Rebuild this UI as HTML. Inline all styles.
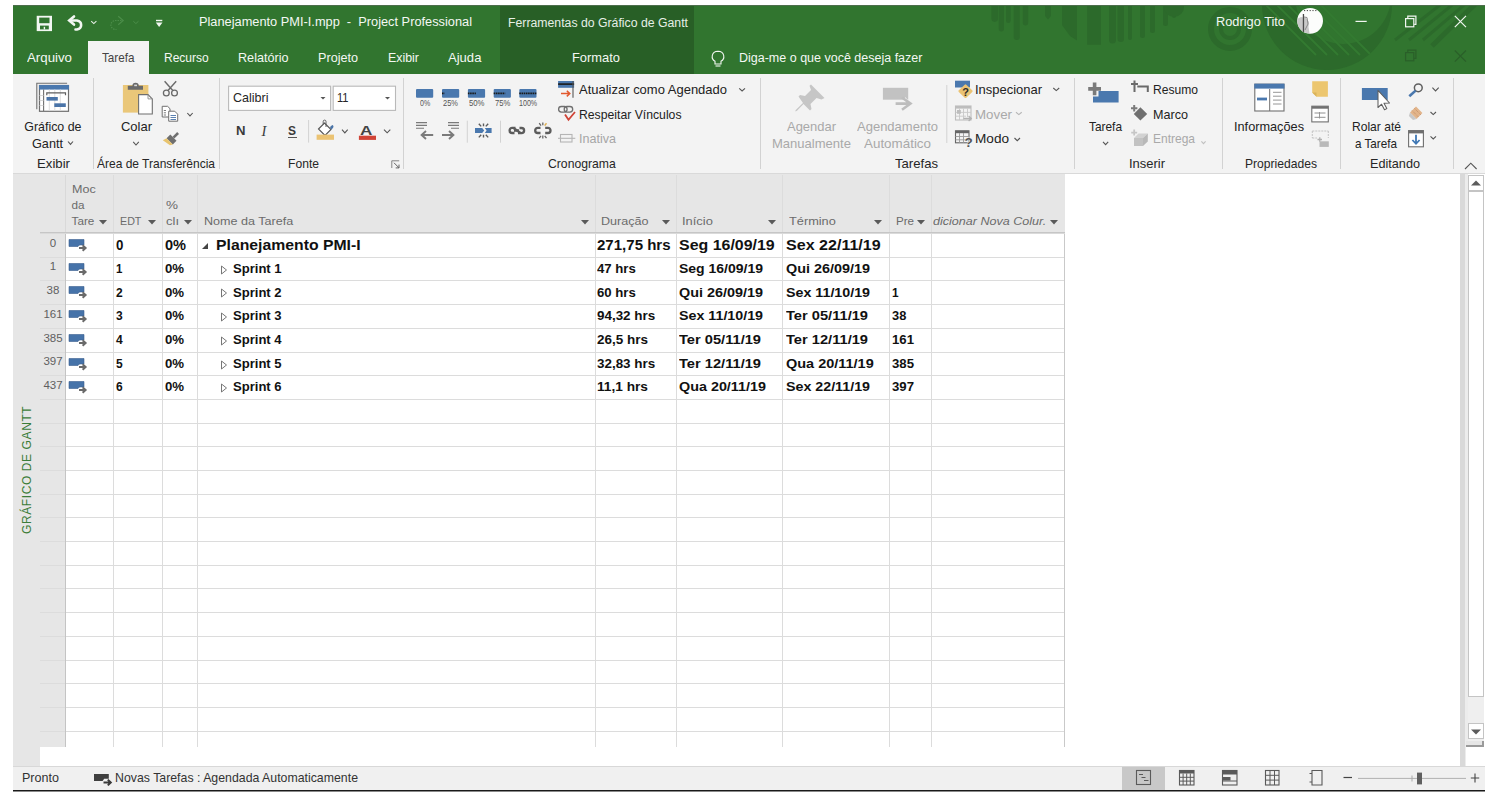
<!DOCTYPE html>
<html><head><meta charset="utf-8"><title>Project</title>
<style>
html,body{margin:0;padding:0;}
body{width:1494px;height:798px;overflow:hidden;position:relative;background:#fff;font-family:"Liberation Sans", sans-serif;}
</style></head><body>
<div style="position:absolute;left:13px;top:5px;width:1472px;height:69px;background:#31752f;"></div>
<div style="position:absolute;left:500px;top:5px;width:194px;height:69px;background:#285f26;"></div>
<svg style="position:absolute;left:13px;top:5px" width="1472" height="69" viewBox="13 5 1472 69"><path d="M991.4 5 V18.599999999999987 A3.3000000000000114 3.3000000000000114 0 0 0 998 18.599999999999987 V5Z" fill="#2c6a2b"/><path d="M998.7 5 V28.850000000000023 A2.6499999999999773 2.6499999999999773 0 0 0 1004 28.850000000000023 V5Z" fill="#2c6a2b"/><path d="M1006 5 V20.649999999999977 A2.3500000000000227 2.3500000000000227 0 0 0 1010.7 20.649999999999977 V5Z" fill="#2c6a2b"/><path d="M1013.7 5 V36.950000000000045 A3.0499999999999545 3.0499999999999545 0 0 0 1019.8 36.950000000000045 V5Z" fill="#2c6a2b"/><path d="M1022.8 5 V22.799999999999955 A2.7000000000000455 2.7000000000000455 0 0 0 1028.2 22.799999999999955 V5Z" fill="#2c6a2b"/><path d="M1109 5 V40.0 A3.5 3.5 0 0 0 1116 40.0 V5Z" fill="#2c6a2b"/><path d="M1117.5 5 V38.75 A3.25 3.25 0 0 0 1124 38.75 V5Z" fill="#2c6a2b"/><path d="M1128 5 V38.0 A2.0 2.0 0 0 0 1132 38.0 V5Z" fill="#2c6a2b"/><path d="M1140 5 V35.5 A2.5 2.5 0 0 0 1145 35.5 V5Z" fill="#2c6a2b"/><path d="M1150 5 V30.5 A2.5 2.5 0 0 0 1155 30.5 V5Z" fill="#2c6a2b"/><path d="M1163 5 V23.5 A2.5 2.5 0 0 0 1168 23.5 V5Z" fill="#2c6a2b"/><path d="M1172 5 V16.0 A2.0 2.0 0 0 0 1176 16.0 V5Z" fill="#2c6a2b"/><path d="M1045 5 H1051 V16 L1048 19.5 L1045 16Z" fill="#2c6a2b"/><path d="M1062 5 H1077 V40.5 L1070 36 L1062 25Z" fill="#2c6a2b"/><path d="M1087.2 5 H1101 V44.8 H1087.2Z" fill="#2c6a2b"/><circle cx="1174" cy="7" r="10" fill="#2c6a2b"/><circle cx="1230" cy="29" r="19" fill="none" stroke="#2c6a2b" stroke-width="6"/><circle cx="1230" cy="29" r="9" fill="none" stroke="#2c6a2b" stroke-width="4"/><defs><clipPath id="bigc"><circle cx="1327" cy="5" r="65"/></clipPath></defs><circle cx="1327" cy="5" r="65" fill="#2c6a2b"/><circle cx="1343" cy="-4" r="48" fill="#31752f"/><g clip-path="url(#bigc)"><path d="M1266 5 L1316 55" stroke="#337a31" stroke-width="1.8"/><path d="M1277 5 L1327 55" stroke="#337a31" stroke-width="1.8"/><path d="M1288 5 L1338 55" stroke="#337a31" stroke-width="1.8"/><path d="M1299 5 L1349 55" stroke="#337a31" stroke-width="1.8"/><path d="M1310 5 L1360 55" stroke="#337a31" stroke-width="1.8"/><path d="M1321 5 L1371 55" stroke="#337a31" stroke-width="1.8"/></g><path d="M1395 40 L1440 5" stroke="#2c6a2b" stroke-width="3"/><path d="M1409 40 L1452 5" stroke="#2c6a2b" stroke-width="3"/><path d="M1423 40 L1464 5" stroke="#2c6a2b" stroke-width="3"/><path d="M1437 40 L1476 5" stroke="#2c6a2b" stroke-width="3"/><path d="M1432 46 L1474 5" stroke="#2c6a2b" stroke-width="5"/></svg>
<div style="position:absolute;left:13px;top:5px;width:1472px;height:1px;background:#4d6e4c;"></div>
<div style="position:absolute;left:88px;top:41px;width:61px;height:33px;background:#f3f3f3;"></div>
<div style="position:absolute;left:13px;top:74px;width:1472px;height:99px;background:#f3f3f3;"></div>
<div style="position:absolute;left:13px;top:173px;width:1472px;height:1px;background:#d9d9d9;"></div>
<span style="position:absolute;left:199.00px;top:16.42px;line-height:12.5px;white-space:pre;color:#f4f8f4;font-size:12.5px;font-weight:400;transform:scaleX(1.0233);transform-origin:0 0;">Planejamento PMI-I.mpp  -  Project Professional</span>
<span style="position:absolute;left:508.00px;top:16.84px;line-height:12px;white-space:pre;color:#e6efe6;font-size:12px;font-weight:400;transform:scaleX(1.0222);transform-origin:0 0;">Ferramentas do Gráfico de Gantt</span>
<span style="position:absolute;left:1216.00px;top:16.42px;line-height:12.5px;white-space:pre;color:#f4f8f4;font-size:12.5px;font-weight:400;transform:scaleX(1.0236);transform-origin:0 0;">Rodrigo Tito</span>
<span style="position:absolute;left:26.70px;top:52.16px;line-height:12.8px;white-space:pre;color:#f4f8f4;font-size:12.8px;font-weight:400;transform:scaleX(1.0371);transform-origin:0 0;">Arquivo</span>
<span style="position:absolute;left:101.70px;top:52.16px;line-height:12.8px;white-space:pre;color:#444;font-size:12.8px;font-weight:400;transform:scaleX(0.9135);transform-origin:0 0;">Tarefa</span>
<span style="position:absolute;left:163.90px;top:52.16px;line-height:12.8px;white-space:pre;color:#f4f8f4;font-size:12.8px;font-weight:400;transform:scaleX(0.9380);transform-origin:0 0;">Recurso</span>
<span style="position:absolute;left:237.90px;top:52.16px;line-height:12.8px;white-space:pre;color:#f4f8f4;font-size:12.8px;font-weight:400;transform:scaleX(0.9860);transform-origin:0 0;">Relatório</span>
<span style="position:absolute;left:317.80px;top:52.16px;line-height:12.8px;white-space:pre;color:#f4f8f4;font-size:12.8px;font-weight:400;transform:scaleX(0.9890);transform-origin:0 0;">Projeto</span>
<span style="position:absolute;left:387.80px;top:52.16px;line-height:12.8px;white-space:pre;color:#f4f8f4;font-size:12.8px;font-weight:400;transform:scaleX(0.9688);transform-origin:0 0;">Exibir</span>
<span style="position:absolute;left:448.00px;top:52.16px;line-height:12.8px;white-space:pre;color:#f4f8f4;font-size:12.8px;font-weight:400;transform:scaleX(1.0203);transform-origin:0 0;">Ajuda</span>
<span style="position:absolute;left:572.00px;top:52.16px;line-height:12.8px;white-space:pre;color:#f4f8f4;font-size:12.8px;font-weight:400;transform:scaleX(1.0072);transform-origin:0 0;">Formato</span>
<span style="position:absolute;left:739.00px;top:52.42px;line-height:12.5px;white-space:pre;color:#f4f8f4;font-size:12.5px;font-weight:400;">Diga-me o que você deseja fazer</span>
<div style="position:absolute;left:93px;top:78px;width:1px;height:91px;background:#d2d2d2;"></div>
<div style="position:absolute;left:219px;top:78px;width:1px;height:91px;background:#d2d2d2;"></div>
<div style="position:absolute;left:403px;top:78px;width:1px;height:91px;background:#d2d2d2;"></div>
<div style="position:absolute;left:760px;top:78px;width:1px;height:91px;background:#d2d2d2;"></div>
<div style="position:absolute;left:1074px;top:78px;width:1px;height:91px;background:#d2d2d2;"></div>
<div style="position:absolute;left:1222px;top:78px;width:1px;height:91px;background:#d2d2d2;"></div>
<div style="position:absolute;left:1340px;top:78px;width:1px;height:91px;background:#d2d2d2;"></div>
<div style="position:absolute;left:1453px;top:78px;width:1px;height:91px;background:#d2d2d2;"></div>
<span style="position:absolute;left:36.50px;top:158.17px;line-height:12.2px;white-space:pre;color:#262626;font-size:12.2px;font-weight:400;transform:scaleX(1.0825);transform-origin:0 0;">Exibir</span>
<span style="position:absolute;left:97.00px;top:158.17px;line-height:12.2px;white-space:pre;color:#262626;font-size:12.2px;font-weight:400;transform:scaleX(0.9840);transform-origin:0 0;">Área de Transferência</span>
<span style="position:absolute;left:287.50px;top:158.17px;line-height:12.2px;white-space:pre;color:#262626;font-size:12.2px;font-weight:400;transform:scaleX(0.9945);transform-origin:0 0;">Fonte</span>
<span style="position:absolute;left:548.00px;top:158.17px;line-height:12.2px;white-space:pre;color:#262626;font-size:12.2px;font-weight:400;">Cronograma</span>
<span style="position:absolute;left:894.50px;top:158.17px;line-height:12.2px;white-space:pre;color:#262626;font-size:12.2px;font-weight:400;transform:scaleX(1.0758);transform-origin:0 0;">Tarefas</span>
<span style="position:absolute;left:1129.00px;top:158.17px;line-height:12.2px;white-space:pre;color:#262626;font-size:12.2px;font-weight:400;transform:scaleX(1.0627);transform-origin:0 0;">Inserir</span>
<span style="position:absolute;left:1245.00px;top:158.17px;line-height:12.2px;white-space:pre;color:#262626;font-size:12.2px;font-weight:400;transform:scaleX(0.9931);transform-origin:0 0;">Propriedades</span>
<span style="position:absolute;left:1370.00px;top:158.17px;line-height:12.2px;white-space:pre;color:#262626;font-size:12.2px;font-weight:400;transform:scaleX(1.0390);transform-origin:0 0;">Editando</span>
<span style="position:absolute;left:24.30px;top:120.50px;line-height:12.4px;white-space:pre;color:#222;font-size:12.4px;font-weight:400;">Gráfico de</span>
<span style="position:absolute;left:31.70px;top:137.50px;line-height:12.4px;white-space:pre;color:#222;font-size:12.4px;font-weight:400;transform:scaleX(1.0227);transform-origin:0 0;">Gantt</span>
<span style="position:absolute;left:120.50px;top:120.50px;line-height:12.4px;white-space:pre;color:#222;font-size:12.4px;font-weight:400;transform:scaleX(1.0470);transform-origin:0 0;">Colar</span>
<span style="position:absolute;left:579.00px;top:83.90px;line-height:12.4px;white-space:pre;color:#222;font-size:12.4px;font-weight:400;transform:scaleX(1.0480);transform-origin:0 0;">Atualizar como Agendado</span>
<span style="position:absolute;left:579.00px;top:108.50px;line-height:12.4px;white-space:pre;color:#222;font-size:12.4px;font-weight:400;transform:scaleX(0.9856);transform-origin:0 0;">Respeitar Vínculos</span>
<span style="position:absolute;left:579.00px;top:133.00px;line-height:12.4px;white-space:pre;color:#a6a6a6;font-size:12.4px;font-weight:400;transform:scaleX(1.0133);transform-origin:0 0;">Inativa</span>
<span style="position:absolute;left:786.50px;top:120.50px;line-height:12.4px;white-space:pre;color:#a9a9a9;font-size:12.4px;font-weight:400;transform:scaleX(1.0457);transform-origin:0 0;">Agendar</span>
<span style="position:absolute;left:771.50px;top:137.50px;line-height:12.4px;white-space:pre;color:#a9a9a9;font-size:12.4px;font-weight:400;transform:scaleX(1.0522);transform-origin:0 0;">Manualmente</span>
<span style="position:absolute;left:856.50px;top:120.50px;line-height:12.4px;white-space:pre;color:#a9a9a9;font-size:12.4px;font-weight:400;transform:scaleX(1.0496);transform-origin:0 0;">Agendamento</span>
<span style="position:absolute;left:863.50px;top:137.50px;line-height:12.4px;white-space:pre;color:#a9a9a9;font-size:12.4px;font-weight:400;transform:scaleX(1.0809);transform-origin:0 0;">Automático</span>
<span style="position:absolute;left:975.00px;top:83.90px;line-height:12.4px;white-space:pre;color:#222;font-size:12.4px;font-weight:400;transform:scaleX(1.0459);transform-origin:0 0;">Inspecionar</span>
<span style="position:absolute;left:975.00px;top:108.50px;line-height:12.4px;white-space:pre;color:#a9a9a9;font-size:12.4px;font-weight:400;transform:scaleX(1.0744);transform-origin:0 0;">Mover</span>
<span style="position:absolute;left:975.00px;top:133.00px;line-height:12.4px;white-space:pre;color:#222;font-size:12.4px;font-weight:400;transform:scaleX(1.0968);transform-origin:0 0;">Modo</span>
<span style="position:absolute;left:1088.50px;top:120.50px;line-height:12.4px;white-space:pre;color:#222;font-size:12.4px;font-weight:400;transform:scaleX(0.9583);transform-origin:0 0;">Tarefa</span>
<span style="position:absolute;left:1153.00px;top:83.90px;line-height:12.4px;white-space:pre;color:#222;font-size:12.4px;font-weight:400;transform:scaleX(0.9753);transform-origin:0 0;">Resumo</span>
<span style="position:absolute;left:1153.00px;top:108.50px;line-height:12.4px;white-space:pre;color:#222;font-size:12.4px;font-weight:400;transform:scaleX(1.0163);transform-origin:0 0;">Marco</span>
<span style="position:absolute;left:1153.00px;top:133.00px;line-height:12.4px;white-space:pre;color:#a9a9a9;font-size:12.4px;font-weight:400;transform:scaleX(0.9676);transform-origin:0 0;">Entrega</span>
<span style="position:absolute;left:1234.00px;top:120.50px;line-height:12.4px;white-space:pre;color:#222;font-size:12.4px;font-weight:400;transform:scaleX(1.0266);transform-origin:0 0;">Informações</span>
<span style="position:absolute;left:1351.50px;top:120.50px;line-height:12.4px;white-space:pre;color:#222;font-size:12.4px;font-weight:400;transform:scaleX(0.9745);transform-origin:0 0;">Rolar até</span>
<span style="position:absolute;left:1355.00px;top:137.50px;line-height:12.4px;white-space:pre;color:#222;font-size:12.4px;font-weight:400;transform:scaleX(0.9428);transform-origin:0 0;">a Tarefa</span>
<div style="position:absolute;left:13px;top:174px;width:27px;height:592px;background:#e6e6e6;"></div>
<div style="position:absolute;left:40px;top:174px;width:1025px;height:59px;background:#e6e6e6;"></div>
<div style="position:absolute;left:40px;top:233px;width:25px;height:514px;background:#e6e6e6;"></div>
<div style="position:absolute;left:65px;top:233px;width:999px;height:514px;background:#ffffff;"></div>
<div style="position:absolute;left:40px;top:257px;width:1024px;height:1px;background:#dcdcdc;"></div>
<div style="position:absolute;left:40px;top:280px;width:1024px;height:1px;background:#dcdcdc;"></div>
<div style="position:absolute;left:40px;top:304px;width:1024px;height:1px;background:#dcdcdc;"></div>
<div style="position:absolute;left:40px;top:328px;width:1024px;height:1px;background:#dcdcdc;"></div>
<div style="position:absolute;left:40px;top:352px;width:1024px;height:1px;background:#dcdcdc;"></div>
<div style="position:absolute;left:40px;top:375px;width:1024px;height:1px;background:#dcdcdc;"></div>
<div style="position:absolute;left:40px;top:399px;width:1024px;height:1px;background:#dcdcdc;"></div>
<div style="position:absolute;left:40px;top:423px;width:1024px;height:1px;background:#dcdcdc;"></div>
<div style="position:absolute;left:40px;top:446px;width:1024px;height:1px;background:#dcdcdc;"></div>
<div style="position:absolute;left:40px;top:470px;width:1024px;height:1px;background:#dcdcdc;"></div>
<div style="position:absolute;left:40px;top:494px;width:1024px;height:1px;background:#dcdcdc;"></div>
<div style="position:absolute;left:40px;top:517px;width:1024px;height:1px;background:#dcdcdc;"></div>
<div style="position:absolute;left:40px;top:541px;width:1024px;height:1px;background:#dcdcdc;"></div>
<div style="position:absolute;left:40px;top:565px;width:1024px;height:1px;background:#dcdcdc;"></div>
<div style="position:absolute;left:40px;top:588px;width:1024px;height:1px;background:#dcdcdc;"></div>
<div style="position:absolute;left:40px;top:612px;width:1024px;height:1px;background:#dcdcdc;"></div>
<div style="position:absolute;left:40px;top:636px;width:1024px;height:1px;background:#dcdcdc;"></div>
<div style="position:absolute;left:40px;top:660px;width:1024px;height:1px;background:#dcdcdc;"></div>
<div style="position:absolute;left:40px;top:683px;width:1024px;height:1px;background:#dcdcdc;"></div>
<div style="position:absolute;left:40px;top:707px;width:1024px;height:1px;background:#dcdcdc;"></div>
<div style="position:absolute;left:40px;top:731px;width:1024px;height:1px;background:#dcdcdc;"></div>
<div style="position:absolute;left:113px;top:175px;width:1px;height:572px;background:#dcdcdc;"></div>
<div style="position:absolute;left:162px;top:175px;width:1px;height:572px;background:#dcdcdc;"></div>
<div style="position:absolute;left:197px;top:175px;width:1px;height:572px;background:#dcdcdc;"></div>
<div style="position:absolute;left:595px;top:175px;width:1px;height:572px;background:#dcdcdc;"></div>
<div style="position:absolute;left:676px;top:175px;width:1px;height:572px;background:#dcdcdc;"></div>
<div style="position:absolute;left:782px;top:175px;width:1px;height:572px;background:#dcdcdc;"></div>
<div style="position:absolute;left:889px;top:175px;width:1px;height:572px;background:#dcdcdc;"></div>
<div style="position:absolute;left:931px;top:175px;width:1px;height:572px;background:#dcdcdc;"></div>
<div style="position:absolute;left:65px;top:175px;width:1px;height:58px;background:#d9d9d9;"></div>
<div style="position:absolute;left:65px;top:233px;width:1px;height:514px;background:#c4c4c4;"></div>
<div style="position:absolute;left:1064px;top:233px;width:1px;height:514px;background:#c9c9c9;"></div>
<div style="position:absolute;left:40px;top:232px;width:1025px;height:1px;background:#c6c6c6;"></div>
<div style="position:absolute;left:40px;top:233px;width:1025px;height:1px;background:#dadada;"></div>
<div style="position:absolute;left:20px;top:534px;width:130px;height:14px;transform:rotate(-90deg);transform-origin:0 0;color:#3b7d39;font-size:12px;line-height:14px;letter-spacing:0.6px;white-space:pre;">GRÁFICO DE GANTT</div>
<span style="position:absolute;left:71.60px;top:182.60px;line-height:11.7px;white-space:pre;color:#6b6b6b;font-size:11.7px;font-weight:400;transform:scaleX(1.0727);transform-origin:0 0;">Moc</span>
<span style="position:absolute;left:71.60px;top:198.60px;line-height:11.7px;white-space:pre;color:#6b6b6b;font-size:11.7px;font-weight:400;">da</span>
<span style="position:absolute;left:71.60px;top:214.70px;line-height:11.7px;white-space:pre;color:#6b6b6b;font-size:11.7px;font-weight:400;">Tare</span>
<span style="position:absolute;left:120.00px;top:214.70px;line-height:11.7px;white-space:pre;color:#6b6b6b;font-size:11.7px;font-weight:400;transform:scaleX(0.9155);transform-origin:0 0;">EDT</span>
<span style="position:absolute;left:165.50px;top:198.60px;line-height:11.7px;white-space:pre;color:#6b6b6b;font-size:11.7px;font-weight:400;transform:scaleX(1.1532);transform-origin:0 0;">%</span>
<span style="position:absolute;left:165.50px;top:214.70px;line-height:11.7px;white-space:pre;color:#6b6b6b;font-size:11.7px;font-weight:400;transform:scaleX(1.1123);transform-origin:0 0;">clı</span>
<span style="position:absolute;left:204.30px;top:214.70px;line-height:11.7px;white-space:pre;color:#6b6b6b;font-size:11.7px;font-weight:400;transform:scaleX(1.0753);transform-origin:0 0;">Nome da Tarefa</span>
<span style="position:absolute;left:601.00px;top:214.70px;line-height:11.7px;white-space:pre;color:#6b6b6b;font-size:11.7px;font-weight:400;transform:scaleX(1.0772);transform-origin:0 0;">Duração</span>
<span style="position:absolute;left:682.00px;top:214.70px;line-height:11.7px;white-space:pre;color:#6b6b6b;font-size:11.7px;font-weight:400;transform:scaleX(1.1060);transform-origin:0 0;">Início</span>
<span style="position:absolute;left:789.20px;top:214.70px;line-height:11.7px;white-space:pre;color:#6b6b6b;font-size:11.7px;font-weight:400;transform:scaleX(1.0915);transform-origin:0 0;">Término</span>
<span style="position:absolute;left:895.60px;top:214.70px;line-height:11.7px;white-space:pre;color:#6b6b6b;font-size:11.7px;font-weight:400;transform:scaleX(0.9943);transform-origin:0 0;">Pre</span>
<span style="position:absolute;left:933.00px;top:214.70px;line-height:11.7px;white-space:pre;color:#6b6b6b;font-size:11.7px;font-weight:400;font-style:italic;transform:scaleX(1.0735);transform-origin:0 0;">dicionar Nova Colur.</span>
<svg style="position:absolute;left:99px;top:220px;" width="8" height="5" viewBox="0 0 8 5"><path d="M0 0H8L4 4.5Z" fill="#5a5a5a"/></svg>
<svg style="position:absolute;left:148px;top:220px;" width="8" height="5" viewBox="0 0 8 5"><path d="M0 0H8L4 4.5Z" fill="#5a5a5a"/></svg>
<svg style="position:absolute;left:184px;top:220px;" width="8" height="5" viewBox="0 0 8 5"><path d="M0 0H8L4 4.5Z" fill="#5a5a5a"/></svg>
<svg style="position:absolute;left:581px;top:220px;" width="8" height="5" viewBox="0 0 8 5"><path d="M0 0H8L4 4.5Z" fill="#5a5a5a"/></svg>
<svg style="position:absolute;left:662px;top:220px;" width="8" height="5" viewBox="0 0 8 5"><path d="M0 0H8L4 4.5Z" fill="#5a5a5a"/></svg>
<svg style="position:absolute;left:768px;top:220px;" width="8" height="5" viewBox="0 0 8 5"><path d="M0 0H8L4 4.5Z" fill="#5a5a5a"/></svg>
<svg style="position:absolute;left:874px;top:220px;" width="8" height="5" viewBox="0 0 8 5"><path d="M0 0H8L4 4.5Z" fill="#5a5a5a"/></svg>
<svg style="position:absolute;left:917px;top:220px;" width="8" height="5" viewBox="0 0 8 5"><path d="M0 0H8L4 4.5Z" fill="#5a5a5a"/></svg>
<svg style="position:absolute;left:1050px;top:220px;" width="8" height="5" viewBox="0 0 8 5"><path d="M0 0H8L4 4.5Z" fill="#5a5a5a"/></svg>
<span style="position:absolute;left:49.80px;top:237.77px;line-height:11.5px;white-space:pre;color:#5f5f5f;font-size:11.5px;font-weight:400;">0</span>
<span style="position:absolute;left:116.00px;top:238.11px;line-height:14.4px;white-space:pre;color:#111;font-size:14.4px;font-weight:700;transform:scaleX(0.9232);transform-origin:0 0;">0</span>
<span style="position:absolute;left:164.50px;top:238.11px;line-height:14.4px;white-space:pre;color:#111;font-size:14.4px;font-weight:700;transform:scaleX(1.0138);transform-origin:0 0;">0%</span>
<span style="position:absolute;left:215.70px;top:238.11px;line-height:14.4px;white-space:pre;color:#111;font-size:14.4px;font-weight:700;transform:scaleX(1.0958);transform-origin:0 0;">Planejamento PMI-I</span>
<span style="position:absolute;left:597.40px;top:238.11px;line-height:14.4px;white-space:pre;color:#111;font-size:14.4px;font-weight:700;transform:scaleX(1.0451);transform-origin:0 0;">271,75 hrs</span>
<span style="position:absolute;left:679.40px;top:238.11px;line-height:14.4px;white-space:pre;color:#111;font-size:14.4px;font-weight:700;transform:scaleX(1.1074);transform-origin:0 0;">Seg 16/09/19</span>
<span style="position:absolute;left:785.80px;top:238.11px;line-height:14.4px;white-space:pre;color:#111;font-size:14.4px;font-weight:700;transform:scaleX(1.1164);transform-origin:0 0;">Sex 22/11/19</span>
<svg style="position:absolute;left:68px;top:238px;" width="20" height="14" viewBox="0 0 20 14"><path d="M1 1.5 H16 V7 H11.5 L10 8.5 H1Z" fill="#4673a9" stroke="#3a5f8f" stroke-width="0.6"/><path d="M11 10 H17.2 M14.6 7.2 L17.6 10 L14.6 12.8" stroke="#6a6a6a" stroke-width="2" fill="none"/></svg>
<svg style="position:absolute;left:201px;top:242px;" width="8" height="8" viewBox="0 0 8 8"><path d="M1 7H7V1Z" fill="#444"/></svg>
<span style="position:absolute;left:49.80px;top:261.47px;line-height:11.5px;white-space:pre;color:#5f5f5f;font-size:11.5px;font-weight:400;">1</span>
<span style="position:absolute;left:116.00px;top:262.84px;line-height:12px;white-space:pre;color:#111;font-size:12px;font-weight:700;transform:scaleX(0.9570);transform-origin:0 0;">1</span>
<span style="position:absolute;left:164.50px;top:262.84px;line-height:12px;white-space:pre;color:#111;font-size:12px;font-weight:700;transform:scaleX(1.1013);transform-origin:0 0;">0%</span>
<span style="position:absolute;left:233.40px;top:262.84px;line-height:12px;white-space:pre;color:#111;font-size:12px;font-weight:700;transform:scaleX(1.0879);transform-origin:0 0;">Sprint 1</span>
<span style="position:absolute;left:597.40px;top:262.84px;line-height:12px;white-space:pre;color:#111;font-size:12px;font-weight:700;transform:scaleX(1.0973);transform-origin:0 0;">47 hrs</span>
<span style="position:absolute;left:679.40px;top:262.84px;line-height:12px;white-space:pre;color:#111;font-size:12px;font-weight:700;transform:scaleX(1.1657);transform-origin:0 0;">Seg 16/09/19</span>
<span style="position:absolute;left:785.80px;top:262.84px;line-height:12px;white-space:pre;color:#111;font-size:12px;font-weight:700;transform:scaleX(1.1992);transform-origin:0 0;">Qui 26/09/19</span>
<svg style="position:absolute;left:68px;top:262px;" width="20" height="14" viewBox="0 0 20 14"><path d="M1 1.5 H16 V7 H11.5 L10 8.5 H1Z" fill="#4673a9" stroke="#3a5f8f" stroke-width="0.6"/><path d="M11 10 H17.2 M14.6 7.2 L17.6 10 L14.6 12.8" stroke="#6a6a6a" stroke-width="2" fill="none"/></svg>
<svg style="position:absolute;left:220px;top:265px;" width="8" height="10" viewBox="0 0 8 10"><path d="M1.5 1V9L6.5 5Z" fill="none" stroke="#777" stroke-width="1"/></svg>
<span style="position:absolute;left:46.60px;top:285.17px;line-height:11.5px;white-space:pre;color:#5f5f5f;font-size:11.5px;font-weight:400;">38</span>
<span style="position:absolute;left:116.00px;top:286.54px;line-height:12px;white-space:pre;color:#111;font-size:12px;font-weight:700;">2</span>
<span style="position:absolute;left:164.50px;top:286.54px;line-height:12px;white-space:pre;color:#111;font-size:12px;font-weight:700;transform:scaleX(1.1013);transform-origin:0 0;">0%</span>
<span style="position:absolute;left:233.40px;top:286.54px;line-height:12px;white-space:pre;color:#111;font-size:12px;font-weight:700;transform:scaleX(1.0879);transform-origin:0 0;">Sprint 2</span>
<span style="position:absolute;left:597.40px;top:286.54px;line-height:12px;white-space:pre;color:#111;font-size:12px;font-weight:700;transform:scaleX(1.0973);transform-origin:0 0;">60 hrs</span>
<span style="position:absolute;left:679.40px;top:286.54px;line-height:12px;white-space:pre;color:#111;font-size:12px;font-weight:700;transform:scaleX(1.1992);transform-origin:0 0;">Qui 26/09/19</span>
<span style="position:absolute;left:785.80px;top:286.54px;line-height:12px;white-space:pre;color:#111;font-size:12px;font-weight:700;transform:scaleX(1.1875);transform-origin:0 0;">Sex 11/10/19</span>
<span style="position:absolute;left:892.00px;top:286.54px;line-height:12px;white-space:pre;color:#111;font-size:12px;font-weight:700;transform:scaleX(0.9869);transform-origin:0 0;">1</span>
<svg style="position:absolute;left:68px;top:285px;" width="20" height="14" viewBox="0 0 20 14"><path d="M1 1.5 H16 V7 H11.5 L10 8.5 H1Z" fill="#4673a9" stroke="#3a5f8f" stroke-width="0.6"/><path d="M11 10 H17.2 M14.6 7.2 L17.6 10 L14.6 12.8" stroke="#6a6a6a" stroke-width="2" fill="none"/></svg>
<svg style="position:absolute;left:220px;top:288px;" width="8" height="10" viewBox="0 0 8 10"><path d="M1.5 1V9L6.5 5Z" fill="none" stroke="#777" stroke-width="1"/></svg>
<span style="position:absolute;left:43.41px;top:308.87px;line-height:11.5px;white-space:pre;color:#5f5f5f;font-size:11.5px;font-weight:400;">161</span>
<span style="position:absolute;left:116.00px;top:310.24px;line-height:12px;white-space:pre;color:#111;font-size:12px;font-weight:700;">3</span>
<span style="position:absolute;left:164.50px;top:310.24px;line-height:12px;white-space:pre;color:#111;font-size:12px;font-weight:700;transform:scaleX(1.1013);transform-origin:0 0;">0%</span>
<span style="position:absolute;left:233.40px;top:310.24px;line-height:12px;white-space:pre;color:#111;font-size:12px;font-weight:700;transform:scaleX(1.0879);transform-origin:0 0;">Sprint 3</span>
<span style="position:absolute;left:597.40px;top:310.24px;line-height:12px;white-space:pre;color:#111;font-size:12px;font-weight:700;transform:scaleX(1.1182);transform-origin:0 0;">94,32 hrs</span>
<span style="position:absolute;left:679.40px;top:310.24px;line-height:12px;white-space:pre;color:#111;font-size:12px;font-weight:700;transform:scaleX(1.1875);transform-origin:0 0;">Sex 11/10/19</span>
<span style="position:absolute;left:785.80px;top:310.24px;line-height:12px;white-space:pre;color:#111;font-size:12px;font-weight:700;transform:scaleX(1.2207);transform-origin:0 0;">Ter 05/11/19</span>
<span style="position:absolute;left:892.00px;top:310.24px;line-height:12px;white-space:pre;color:#111;font-size:12px;font-weight:700;transform:scaleX(1.0704);transform-origin:0 0;">38</span>
<svg style="position:absolute;left:68px;top:309px;" width="20" height="14" viewBox="0 0 20 14"><path d="M1 1.5 H16 V7 H11.5 L10 8.5 H1Z" fill="#4673a9" stroke="#3a5f8f" stroke-width="0.6"/><path d="M11 10 H17.2 M14.6 7.2 L17.6 10 L14.6 12.8" stroke="#6a6a6a" stroke-width="2" fill="none"/></svg>
<svg style="position:absolute;left:220px;top:312px;" width="8" height="10" viewBox="0 0 8 10"><path d="M1.5 1V9L6.5 5Z" fill="none" stroke="#777" stroke-width="1"/></svg>
<span style="position:absolute;left:43.41px;top:332.57px;line-height:11.5px;white-space:pre;color:#5f5f5f;font-size:11.5px;font-weight:400;">385</span>
<span style="position:absolute;left:116.00px;top:333.94px;line-height:12px;white-space:pre;color:#111;font-size:12px;font-weight:700;">4</span>
<span style="position:absolute;left:164.50px;top:333.94px;line-height:12px;white-space:pre;color:#111;font-size:12px;font-weight:700;transform:scaleX(1.1013);transform-origin:0 0;">0%</span>
<span style="position:absolute;left:233.40px;top:333.94px;line-height:12px;white-space:pre;color:#111;font-size:12px;font-weight:700;transform:scaleX(1.0879);transform-origin:0 0;">Sprint 4</span>
<span style="position:absolute;left:597.40px;top:333.94px;line-height:12px;white-space:pre;color:#111;font-size:12px;font-weight:700;transform:scaleX(1.1218);transform-origin:0 0;">26,5 hrs</span>
<span style="position:absolute;left:679.40px;top:333.94px;line-height:12px;white-space:pre;color:#111;font-size:12px;font-weight:700;transform:scaleX(1.2207);transform-origin:0 0;">Ter 05/11/19</span>
<span style="position:absolute;left:785.80px;top:333.94px;line-height:12px;white-space:pre;color:#111;font-size:12px;font-weight:700;transform:scaleX(1.2207);transform-origin:0 0;">Ter 12/11/19</span>
<span style="position:absolute;left:892.00px;top:333.94px;line-height:12px;white-space:pre;color:#111;font-size:12px;font-weight:700;transform:scaleX(1.0983);transform-origin:0 0;">161</span>
<svg style="position:absolute;left:68px;top:333px;" width="20" height="14" viewBox="0 0 20 14"><path d="M1 1.5 H16 V7 H11.5 L10 8.5 H1Z" fill="#4673a9" stroke="#3a5f8f" stroke-width="0.6"/><path d="M11 10 H17.2 M14.6 7.2 L17.6 10 L14.6 12.8" stroke="#6a6a6a" stroke-width="2" fill="none"/></svg>
<svg style="position:absolute;left:220px;top:336px;" width="8" height="10" viewBox="0 0 8 10"><path d="M1.5 1V9L6.5 5Z" fill="none" stroke="#777" stroke-width="1"/></svg>
<span style="position:absolute;left:43.41px;top:356.27px;line-height:11.5px;white-space:pre;color:#5f5f5f;font-size:11.5px;font-weight:400;">397</span>
<span style="position:absolute;left:116.00px;top:357.64px;line-height:12px;white-space:pre;color:#111;font-size:12px;font-weight:700;">5</span>
<span style="position:absolute;left:164.50px;top:357.64px;line-height:12px;white-space:pre;color:#111;font-size:12px;font-weight:700;transform:scaleX(1.1013);transform-origin:0 0;">0%</span>
<span style="position:absolute;left:233.40px;top:357.64px;line-height:12px;white-space:pre;color:#111;font-size:12px;font-weight:700;transform:scaleX(1.0879);transform-origin:0 0;">Sprint 5</span>
<span style="position:absolute;left:597.40px;top:357.64px;line-height:12px;white-space:pre;color:#111;font-size:12px;font-weight:700;transform:scaleX(1.1182);transform-origin:0 0;">32,83 hrs</span>
<span style="position:absolute;left:679.40px;top:357.64px;line-height:12px;white-space:pre;color:#111;font-size:12px;font-weight:700;transform:scaleX(1.2207);transform-origin:0 0;">Ter 12/11/19</span>
<span style="position:absolute;left:785.80px;top:357.64px;line-height:12px;white-space:pre;color:#111;font-size:12px;font-weight:700;transform:scaleX(1.2058);transform-origin:0 0;">Qua 20/11/19</span>
<span style="position:absolute;left:892.00px;top:357.64px;line-height:12px;white-space:pre;color:#111;font-size:12px;font-weight:700;transform:scaleX(1.0983);transform-origin:0 0;">385</span>
<svg style="position:absolute;left:68px;top:357px;" width="20" height="14" viewBox="0 0 20 14"><path d="M1 1.5 H16 V7 H11.5 L10 8.5 H1Z" fill="#4673a9" stroke="#3a5f8f" stroke-width="0.6"/><path d="M11 10 H17.2 M14.6 7.2 L17.6 10 L14.6 12.8" stroke="#6a6a6a" stroke-width="2" fill="none"/></svg>
<svg style="position:absolute;left:220px;top:360px;" width="8" height="10" viewBox="0 0 8 10"><path d="M1.5 1V9L6.5 5Z" fill="none" stroke="#777" stroke-width="1"/></svg>
<span style="position:absolute;left:43.41px;top:379.97px;line-height:11.5px;white-space:pre;color:#5f5f5f;font-size:11.5px;font-weight:400;">437</span>
<span style="position:absolute;left:116.00px;top:381.34px;line-height:12px;white-space:pre;color:#111;font-size:12px;font-weight:700;">6</span>
<span style="position:absolute;left:164.50px;top:381.34px;line-height:12px;white-space:pre;color:#111;font-size:12px;font-weight:700;transform:scaleX(1.1013);transform-origin:0 0;">0%</span>
<span style="position:absolute;left:233.40px;top:381.34px;line-height:12px;white-space:pre;color:#111;font-size:12px;font-weight:700;transform:scaleX(1.0879);transform-origin:0 0;">Sprint 6</span>
<span style="position:absolute;left:597.40px;top:381.34px;line-height:12px;white-space:pre;color:#111;font-size:12px;font-weight:700;transform:scaleX(1.1386);transform-origin:0 0;">11,1 hrs</span>
<span style="position:absolute;left:679.40px;top:381.34px;line-height:12px;white-space:pre;color:#111;font-size:12px;font-weight:700;transform:scaleX(1.1961);transform-origin:0 0;">Qua 20/11/19</span>
<span style="position:absolute;left:785.80px;top:381.34px;line-height:12px;white-space:pre;color:#111;font-size:12px;font-weight:700;transform:scaleX(1.1875);transform-origin:0 0;">Sex 22/11/19</span>
<span style="position:absolute;left:892.00px;top:381.34px;line-height:12px;white-space:pre;color:#111;font-size:12px;font-weight:700;transform:scaleX(1.0983);transform-origin:0 0;">397</span>
<svg style="position:absolute;left:68px;top:380px;" width="20" height="14" viewBox="0 0 20 14"><path d="M1 1.5 H16 V7 H11.5 L10 8.5 H1Z" fill="#4673a9" stroke="#3a5f8f" stroke-width="0.6"/><path d="M11 10 H17.2 M14.6 7.2 L17.6 10 L14.6 12.8" stroke="#6a6a6a" stroke-width="2" fill="none"/></svg>
<svg style="position:absolute;left:220px;top:383px;" width="8" height="10" viewBox="0 0 8 10"><path d="M1.5 1V9L6.5 5Z" fill="none" stroke="#777" stroke-width="1"/></svg>
<div style="position:absolute;left:40px;top:747px;width:1420px;height:19px;background:#ffffff;"></div>
<div style="position:absolute;left:1460px;top:174px;width:5px;height:592px;background:#d9d9d9;"></div>
<div style="position:absolute;left:1465px;top:174px;width:3px;height:592px;background:#ececec;"></div>
<div style="position:absolute;left:1468px;top:175px;width:16px;height:591px;background:#efefef;"></div>
<div style="position:absolute;left:1468px;top:175px;width:16px;height:16px;background:#ffffff;box-sizing:border-box;border:1px solid #c4c4c4;"></div>
<svg style="position:absolute;left:1471px;top:180px;" width="10" height="6" viewBox="0 0 10 6"><path d="M0 5.5H10L5 0.5Z" fill="#5c5c5c"/></svg>
<div style="position:absolute;left:1468px;top:191px;width:16px;height:506px;background:#ffffff;box-sizing:border-box;border:1px solid #c4c4c4;"></div>
<div style="position:absolute;left:1468px;top:723px;width:16px;height:16px;background:#ffffff;box-sizing:border-box;border:1px solid #c4c4c4;"></div>
<svg style="position:absolute;left:1471px;top:729px;" width="10" height="6" viewBox="0 0 10 6"><path d="M0 0.5H10L5 5.5Z" fill="#5c5c5c"/></svg>
<div style="position:absolute;left:1466px;top:747px;width:18px;height:19px;background:#ffffff;"></div>
<div style="position:absolute;left:1466px;top:741px;width:18px;height:6px;background:#e6e6e6;box-sizing:border-box;border-bottom:2px solid #9a9a9a;border-right:2px solid #9a9a9a;"></div>
<div style="position:absolute;left:13px;top:766px;width:1472px;height:24px;background:#f0f0f0;"></div>
<div style="position:absolute;left:13px;top:766px;width:1472px;height:1px;background:#d8d8d8;"></div>
<div style="position:absolute;left:13px;top:790px;width:1472px;height:1px;background:#1a1a1a;"></div>
<div style="position:absolute;left:13px;top:791px;width:1472px;height:1px;background:#8a8a8a;"></div>
<span style="position:absolute;left:22.00px;top:771.67px;line-height:12.2px;white-space:pre;color:#333;font-size:12.2px;font-weight:400;transform:scaleX(1.0300);transform-origin:0 0;">Pronto</span>
<span style="position:absolute;left:114.50px;top:771.67px;line-height:12.2px;white-space:pre;color:#333;font-size:12.2px;font-weight:400;transform:scaleX(1.0112);transform-origin:0 0;">Novas Tarefas : Agendada Automaticamente</span>
<div style="position:absolute;left:1122px;top:767px;width:43px;height:23px;background:#c8c8c8;"></div>
<svg style="position:absolute;left:0;top:0" width="1494" height="798" viewBox="0 0 1494 798"><rect x="36.7" y="15.8" width="15.3" height="15.3" fill="#f2f7f2"/><rect x="39.2" y="17.6" width="10.3" height="5.6" fill="#31752f"/><rect x="40" y="25.6" width="8.8" height="3.8" fill="#31752f"/><rect x="43.7" y="26.8" width="1.4" height="2.6" fill="#f2f7f2"/><path d="M70.5 20.5 H77 A5.2 4.6 0 0 1 77 29.5 H75.5" stroke="#f2f7f2" stroke-width="2.6" fill="none" stroke-linecap="round"/><path d="M74 16.4 L69.2 20.5 L74 24.6" stroke="#f2f7f2" stroke-width="2.6" fill="none" stroke-linecap="round"/><path d="M91.2 21.2 L93.8 23.6 L96.4 21.2" stroke="#e8f0e8" stroke-width="1.1" fill="none"/><path d="M121.5 20.5 H115 A5.2 4.6 0 0 0 115 29.5 H116.5" stroke="#4b8d49" stroke-width="1.2" fill="none" stroke-dasharray="1.5 1"/><path d="M118.2 16.2 L123.2 20.5 L118.2 24.8" stroke="#4b8d49" stroke-width="1.2" fill="none"/><path d="M133.3 21.2 L135.9 23.6 L138.5 21.2" stroke="#4b8d49" stroke-width="1" fill="none"/><rect x="156" y="19.8" width="6.3" height="1.4" fill="#f2f7f2"/><path d="M155.8 22.6 H162.5 L159.15 26.9Z" fill="#f2f7f2"/><defs><clipPath id="av"><circle cx="1310.1" cy="20.85" r="12.9"/></clipPath></defs><circle cx="1310.1" cy="20.85" r="12.9" fill="#fcfdfc"/><g clip-path="url(#av)"><path d="M1297 19 L1301 17 L1306 18 L1309 22 L1308.5 27 L1309.5 33 L1297 33Z" fill="#c9c9c9"/><rect x="1302.8" y="14" width="1.3" height="18" fill="#4a4a4a"/><path d="M1304 17 L1307 17.5 L1308 24 L1305 30" fill="none" stroke="#8a8a8a" stroke-width="1"/><path d="M1304 10.6 H1318" stroke="#444" stroke-width="1" stroke-dasharray="1.2 1.6"/></g><rect x="1355.5" y="20.8" width="11.2" height="1.2" fill="#f2f7f2"/><rect x="1405.6" y="18.6" width="8.2" height="8.2" fill="none" stroke="#f2f7f2" stroke-width="1.2"/><path d="M1407.8 18 V16.2 H1415.9 V24.3 H1414.2" fill="none" stroke="#f2f7f2" stroke-width="1.2"/><path d="M1454.8 15.9 L1466 27.1 M1466 15.9 L1454.8 27.1" stroke="#f2f7f2" stroke-width="1.2"/><rect x="1405.6" y="52.6" width="8.2" height="8.2" fill="none" stroke="#2a5f29" stroke-width="1.2"/><path d="M1407.8 52 V50.2 H1415.9 V58.3 H1414.2" fill="none" stroke="#2a5f29" stroke-width="1.2"/><path d="M1454.8 50.5 L1466 61.7 M1466 50.5 L1454.8 61.7" stroke="#2a5f29" stroke-width="1.2"/><path d="M715 64 V61.2 C710.8 59 711 51.5 718 51.3 C725 51.5 725.2 59 721 61.2 V64 Z" fill="none" stroke="#f2f7f2" stroke-width="1.1"/><path d="M715.5 66 H720.5" stroke="#f2f7f2" stroke-width="1.1"/><path d="M36.8 109.3 V83.3 H67.1" fill="none" stroke="#707070" stroke-width="1.1"/><rect x="39.5" y="85.5" width="29" height="25.8" fill="#fff" stroke="#6f6f6f" stroke-width="1.2"/><rect x="39" y="85" width="30" height="4.6" fill="#4a78ae"/><path d="M43.6 89.5 V111" stroke="#6f6f6f" stroke-width="1.1"/><path d="M49.3 89.5 V111 M54.8 89.5 V111 M60.3 89.5 V111" stroke="#dadada" stroke-width="0.9"/><path d="M39.5 95.5 H43.5 M39.5 100.5 H43.5 M39.5 105.5 H43.5" stroke="#cfcfcf" stroke-width="0.8"/><path d="M46.8 95.2 V92.8 H65.5 V95.2" fill="none" stroke="#5f5f5f" stroke-width="1.2"/><rect x="46.5" y="97" width="11.3" height="3.6" fill="#4a74a8"/><rect x="54.3" y="103.3" width="11.5" height="3.7" fill="#4a74a8"/><path d="M68 141.5 L70.5 144.4 L73 141.5" fill="none" stroke="#555" stroke-width="1.1"/><rect x="122.9" y="85" width="25.5" height="27.6" fill="#eac779"/><path d="M127.8 89.8 V85.8 H132.4 A3.2 3 0 0 1 138.8 85.8 H143 V89.8Z" fill="#6a6a6a"/><rect x="134.2" y="84.6" width="2.8" height="1.6" fill="#d9d9d9"/><path d="M138.6 94.6 H148 L152.3 98.9 V114 H138.6Z" fill="#fff" stroke="#6f6f6f" stroke-width="1.1"/><path d="M148 94.6 V98.9 H152.3" fill="none" stroke="#8a8a8a" stroke-width="0.9"/><path d="M133.2 141.8 L136.0 145 L138.8 141.8" fill="none" stroke="#555" stroke-width="1.1"/><circle cx="166.3" cy="93" r="2.9" fill="none" stroke="#6a6a6a" stroke-width="1.3"/><circle cx="174.5" cy="93" r="2.9" fill="none" stroke="#6a6a6a" stroke-width="1.3"/><path d="M168 90.5 L176.2 81.2 M172.8 90.5 L164.6 81.2" stroke="#6a6a6a" stroke-width="1.4"/><path d="M162.2 106.3 H167.6 L170 108.7 V117 H162.2Z" fill="#fff" stroke="#6f6f6f" stroke-width="1"/><path d="M163.8 110.5 H166 M163.8 112.8 H166 M163.8 115 H166" stroke="#6f6f6f" stroke-width="0.9"/><path d="M168.7 111.2 H174.7 L177.7 114.2 V121.2 H168.7Z" fill="#fff" stroke="#6f6f6f" stroke-width="1"/><path d="M170.5 115.5 H176 M170.5 117.5 H176 M170.5 119.5 H176" stroke="#4a74a8" stroke-width="0.9"/><path d="M187.3 113 L190.0 115.9 L192.7 113" fill="none" stroke="#555" stroke-width="1.1"/><path d="M172.5 136.8 L177.2 132.1 L179 133.9 L174.3 138.6Z" fill="#6f6f6f"/><path d="M170.3 134.6 L176.5 140.8 L172.8 144.5 L166.6 138.3Z" fill="#6f6f6f"/><path d="M166.6 138.3 L172.8 144.5 L170 145.2 L162.8 140.2Z" fill="#e8c46e"/><rect x="228.6" y="86.2" width="102" height="24.2" fill="#fff" stroke="#b9b9b9" stroke-width="1.1"/><rect x="333.2" y="86.2" width="62.3" height="24.2" fill="#fff" stroke="#b9b9b9" stroke-width="1.1"/><path d="M320.5 97 H325.5 L323 99.6Z" fill="#555"/><path d="M385 97 H390 L387.5 99.6Z" fill="#555"/><path d="M308.6 120 V142.6" stroke="#d2d2d2" stroke-width="1"/><path d="M318.5 129 L324.5 123 L331 129.5 L325 135.5Z" fill="#fff" stroke="#555" stroke-width="1.1"/><path d="M331 129.5 C334 128 334 125.5 332.3 125 L330 127Z" fill="#4a74a8"/><path d="M323.2 124.2 V121.5 A1.4 1.4 0 0 1 326 121.5 V127" fill="none" stroke="#555" stroke-width="0.9"/><rect x="316.6" y="134.6" width="17.4" height="5.2" fill="#ebc373"/><path d="M342 129.6 L344.85 132.8 L347.7 129.6" fill="none" stroke="#555" stroke-width="1.1"/><rect x="358.9" y="135.7" width="17.1" height="4.2" fill="#d04437"/><path d="M384 129.6 L387.15 132.8 L390.3 129.6" fill="none" stroke="#555" stroke-width="1.1"/><path d="M391.8 168 V160.8 H399.2" fill="none" stroke="#777" stroke-width="0.9"/><path d="M394 162.8 L399 167.8 M399 164.6 V167.9 H395.7" fill="none" stroke="#555" stroke-width="0.9"/><rect x="416" y="89" width="17.2" height="8.8" rx="1" fill="#4a78ae"/><rect x="442" y="89" width="17.2" height="8.8" rx="1" fill="#4a78ae"/><path d="M442 93.4 H444.5" stroke="#1a1a1a" stroke-width="1.6" stroke-dasharray="1.6 0.6"/><rect x="467.9" y="89" width="17.2" height="8.8" rx="1" fill="#4a78ae"/><path d="M467.9 93.4 H475.9" stroke="#1a1a1a" stroke-width="1.6" stroke-dasharray="1.6 0.6"/><rect x="493.7" y="89" width="17.2" height="8.8" rx="1" fill="#4a78ae"/><path d="M493.7 93.4 H505.2" stroke="#1a1a1a" stroke-width="1.6" stroke-dasharray="1.6 0.6"/><rect x="519.3" y="89" width="17.2" height="8.8" rx="1" fill="#4a78ae"/><path d="M519.3 93.4 H536.8" stroke="#1a1a1a" stroke-width="1.6" stroke-dasharray="1.6 0.6"/><path d="M416 122.6 H427 M416 125.4 H427 M416 128.2 H424" stroke="#7a7a7a" stroke-width="1.1"/><path d="M422 135 H433.2 M426 131 L421.6 135 L426 139" fill="none" stroke="#7a7a7a" stroke-width="1.9"/><path d="M448 122.6 H459 M448 125.4 H459 M451 128.2 H459" stroke="#7a7a7a" stroke-width="1.1"/><path d="M442 135 H453 M449 131 L453.4 135 L449 139" fill="none" stroke="#7a7a7a" stroke-width="1.9"/><path d="M467.3 120.7 V142.7 M500.5 120.7 V142.7" stroke="#d2d2d2" stroke-width="1"/><path d="M475 128 H482.2 L484.2 130.5 L482.2 133 H475Z M484.8 128 H491.6 V133 H484.8 L486.6 130.5Z" fill="#4a78ae"/><path d="M483.5 123.5 V126.2 M483.5 134.8 V137.6 M478.8 123.8 L481.2 126.4 M488.2 123.8 L485.8 126.4 M478.8 137.4 L481.2 134.8 M488.2 137.4 L485.8 134.8" stroke="#5a5a5a" stroke-width="1.4"/><path d="M515.5 127.8 H512.2 A2.6 2.6 0 0 0 512.2 133 H514.5 M518 133.2 H521.5 A2.6 2.6 0 0 0 521.5 128 H519.5 M514 130.5 L519 130.5" fill="none" stroke="#5c5c5c" stroke-width="2.3"/><path d="M513.5 128 L520.5 133" stroke="#5c5c5c" stroke-width="2.2"/><path d="M540.5 127.8 H537.8 A2.6 2.6 0 0 0 537.8 133 H540.5 M545.2 127.8 H547.9 A2.6 2.6 0 0 1 547.9 133 H545.2" fill="none" stroke="#5c5c5c" stroke-width="2.3"/><path d="M542.8 122.5 V125.2 M542.8 135.6 V138.6 M539.2 123.2 L541 125.6 M539.2 138.2 L541 135.8 M546.5 138.2 L544.7 135.8" stroke="#666" stroke-width="1.3"/><path d="M546.5 123.2 L544.7 125.6" stroke="#e0b050" stroke-width="1.5"/><rect x="558.1" y="81" width="16" height="6.8" fill="#4a78ae"/><rect x="558.1" y="83.3" width="16" height="1.6" fill="#1a1a1a"/><path d="M573 81 V97.8" stroke="#555" stroke-width="1.1"/><path d="M561 93.6 H569.5 M566.8 90.8 L569.8 93.6 L566.8 96.4" fill="none" stroke="#e2582c" stroke-width="1.5"/><path d="M739.2 88.3 L742.1 91 L745 88.3" fill="none" stroke="#555" stroke-width="1.1"/><rect x="558.6" y="106.5" width="8.5" height="5.6" rx="2.8" fill="none" stroke="#6f6f6f" stroke-width="1.3"/><rect x="564.2" y="106.5" width="8.5" height="5.6" rx="2.8" fill="none" stroke="#6f6f6f" stroke-width="1.3"/><path d="M565 114.5 L568.5 119.8 L575 112" fill="none" stroke="#d04437" stroke-width="1.8"/><rect x="560.5" y="134.5" width="11.5" height="7.5" fill="none" stroke="#b5b5b5" stroke-width="1.1"/><path d="M558 138.3 H575.3" stroke="#b5b5b5" stroke-width="1.1"/><path d="M811 84.5 L824.5 98 L821.5 99.5 L816.5 98 L810.5 104 L811.5 109 L810 110.5 L803.5 104 L797 110.8 L795.5 111.5 L795.5 110.2 L803 103 L798.5 96.5 L800 95 L805 96 L811 90 L809.5 85.8Z" fill="#c6c6c6"/><rect x="882.9" y="87.8" width="25.3" height="11.9" fill="#c2c2c2"/><path d="M905 97 L912 104 L905 111 Z" fill="#f3f3f3"/><path d="M895.6 103.6 H910 M902 97.5 L910.5 103.6 L902 109.8" fill="none" stroke="#bdbdbd" stroke-width="2.6"/><path d="M946.8 85 V143" stroke="#d2d2d2" stroke-width="1"/><rect x="955" y="80.7" width="15" height="6.8" fill="#4a78ae"/><path d="M965.5 85.6 L971.4 91.2 L965.5 96.8 L959.6 91.2Z" fill="#ebc373" stroke="#ebc373" stroke-width="2.4" stroke-linejoin="round"/><text x="965.6" y="95.6" font-family="Liberation Sans" font-weight="700" font-size="11" text-anchor="middle" fill="#2a2a2a">?</text><path d="M1053.3 88 L1056.25 90.6 L1059.2 88" fill="none" stroke="#555" stroke-width="1.1"/><rect x="955.5" y="106" width="15.5" height="14" fill="none" stroke="#bdbdbd" stroke-width="1.1"/><rect x="955.5" y="106" width="15.5" height="2.6" fill="#bdbdbd"/><path d="M959.5 108.6 V120 M963.5 108.6 V120 M967.5 108.6 V117 M955.5 112.4 H971 M955.5 116.2 H966" stroke="#c8c8c8" stroke-width="0.9"/><rect x="957" y="110" width="3.8" height="3.8" fill="#bdbdbd"/><path d="M963.5 118.5 H971 M968.6 116 L971.3 118.5 L968.6 121" fill="none" stroke="#b2b2b2" stroke-width="1.3"/><path d="M1016 112.3 L1018.85 114.6 L1021.7 112.3" fill="none" stroke="#b5b5b5" stroke-width="1.1"/><rect x="955.5" y="130.8" width="13.5" height="12" fill="none" stroke="#666" stroke-width="1.1"/><rect x="955.5" y="130.8" width="13.5" height="2.4" fill="#666"/><path d="M959.5 133 V142.8 M963.5 133 V142.8 M955.5 136.5 H969 M955.5 139.8 H969" stroke="#9a9a9a" stroke-width="0.9"/><text x="968.6" y="147" font-family="Liberation Sans" font-weight="700" font-size="13.5" text-anchor="middle" fill="#555" stroke="#f3f3f3" stroke-width="1" paint-order="stroke">?</text><path d="M1014.5 138 L1017.25 140.7 L1020 138" fill="none" stroke="#555" stroke-width="1.1"/><path d="M1098.5 91 H1118.6 V102.6 H1093 V96.5 H1098.5Z" fill="#4a78ae"/><path d="M1094.6 82.6 V95.2 M1088.2 88.9 H1101" stroke="#7a7a7a" stroke-width="3.6"/><path d="M1103 141.8 L1105.6 144.6 L1108.2 141.8" fill="none" stroke="#555" stroke-width="1.1"/><path d="M1134.5 80.6 V92 M1131 84 H1138" stroke="#6a6a6a" stroke-width="2"/><path d="M1137.3 86.6 H1147.8 V92" fill="none" stroke="#6a6a6a" stroke-width="2"/><path d="M1134.2 105 V111.5 M1131 108.2 H1137.4" stroke="#7a7a7a" stroke-width="2"/><path d="M1140.4 107.3 L1147.2 114 L1140.4 120.6 L1133.8 114Z" fill="#6f6f6f"/><path d="M1134.2 129.6 V135.6 M1131.2 132.6 H1137.2" stroke="#c6c6c6" stroke-width="1.8"/><path d="M1134 138 H1143 V146 H1134Z" fill="#c2c2c2"/><path d="M1134 138 L1138.5 133.5 H1147.8 L1143 138Z" fill="#d2d2d2"/><path d="M1143 138 L1147.8 133.5 V141.5 L1143 146Z" fill="#b8b8b8"/><path d="M1201.4 141.3 L1203.5 143.6 L1205.6 141.3" fill="none" stroke="#c0c0c0" stroke-width="1.1"/><rect x="1254.8" y="84.2" width="29.2" height="26.8" fill="#fff" stroke="#6f6f6f" stroke-width="1.1"/><rect x="1254.3" y="83.7" width="30.2" height="4.9" fill="#4a78ae"/><path d="M1269.7 89 V111" stroke="#6f6f6f" stroke-width="1"/><rect x="1257" y="97.6" width="10" height="2.8" fill="#4a78ae"/><path d="M1273 92.3 H1281.5 M1273 96.2 H1281.5 M1273 100.1 H1281.5 M1273 104 H1281.5" stroke="#8a8a8a" stroke-width="0.9"/><path d="M1312.2 81.3 H1327.9 V96.7 H1316.5 L1312.2 92.4Z" fill="#ecc66f"/><path d="M1312.2 92.4 H1316.5 V96.7Z" fill="#d9b35b"/><rect x="1311.8" y="106.2" width="16.5" height="15.7" fill="#fff" stroke="#707070" stroke-width="1.1"/><rect x="1311.8" y="106.2" width="16.5" height="2.5" fill="#707070"/><path d="M1314.5 113 H1325.5 M1314.5 117.3 H1325.5" stroke="#909090" stroke-width="1"/><path d="M1319.5 112 V118.5" stroke="#909090" stroke-width="0.9"/><path d="M1312.3 131 H1328.3 M1312.3 131 V138 M1328.3 131 V138 M1312.3 138 H1317" fill="none" stroke="#c4c4c4" stroke-width="1" stroke-dasharray="2 1"/><path d="M1317.5 139.5 H1322 M1319.8 137.2 V141.8" stroke="#b0b0b0" stroke-width="1.3"/><rect x="1319.5" y="141.3" width="9.3" height="5.6" fill="#b9b9b9"/><rect x="1361.9" y="88" width="25.8" height="12" fill="#4a78ae"/><path d="M1378 90.4 V107.5 L1381.6 104.2 L1384.5 109.7 L1386.8 108.6 L1384 103.2 L1389.5 103Z" fill="#fff" stroke="#5f5f5f" stroke-width="1.05" stroke-linejoin="round"/><circle cx="1418.3" cy="87.8" r="3.9" fill="none" stroke="#5f5f5f" stroke-width="1.5"/><path d="M1415.6 90.6 L1409.3 96.3" stroke="#4a78ae" stroke-width="2.6"/><path d="M1432.4 87.7 L1435.5500000000002 90.9 L1438.7 87.7" fill="none" stroke="#555" stroke-width="1.1"/><path d="M1416 106.6 L1422.4 113 L1416.5 119 L1410 112.5Z" fill="#e2b48a"/><path d="M1412 110.5 L1418.5 117 M1414.5 108.5 L1421 115" stroke="#b57e56" stroke-width="0.7" stroke-dasharray="1 1"/><path d="M1410 112.5 L1416.5 119 L1413 120 L1408.9 116Z" fill="#c8c8c8"/><path d="M1430.5 112 L1433.25 114.6 L1436 112" fill="none" stroke="#555" stroke-width="1.1"/><rect x="1408.6" y="130.6" width="14.8" height="16.2" fill="#fff" stroke="#6f6f6f" stroke-width="1.1"/><rect x="1408.6" y="130.6" width="14.8" height="2.8" fill="#6f6f6f"/><path d="M1416 134.8 V143.5 M1412.4 140 L1416 143.8 L1419.6 140" fill="none" stroke="#3f78b5" stroke-width="1.8"/><path d="M1430.5 136.3 L1433.25 138.9 L1436 136.3" fill="none" stroke="#555" stroke-width="1.1"/><path d="M1465 169 L1470.8 163.2 L1476.6 169" fill="none" stroke="#555" stroke-width="1.1"/><path d="M94 774 H108.8 V778.8 H104.2 L102.6 781 H94Z" fill="#3f3f3f"/><path d="M103.5 782.5 H110.6 M107.8 779.6 L110.8 782.5 L107.8 785.4" fill="none" stroke="#3a3a3a" stroke-width="2"/><rect x="1136.5" y="770.5" width="14" height="14" fill="none" stroke="#5a5a5a" stroke-width="1.1"/><path d="M1139 774.5 H1143 M1141.5 777.5 H1145.5 M1144 780.5 H1148.5" stroke="#5a5a5a" stroke-width="1.1"/><rect x="1179.5" y="770.5" width="14.5" height="14.5" fill="none" stroke="#5a5a5a" stroke-width="1.1"/><rect x="1179.5" y="770.5" width="14.5" height="3" fill="#5a5a5a"/><path d="M1183.1 773.5 V785 M1186.7 773.5 V785 M1190.3 773.5 V785 M1179.5 777.3 H1194 M1179.5 781.1 H1194" stroke="#5a5a5a" stroke-width="1"/><rect x="1222.5" y="770.5" width="14.5" height="14.5" fill="none" stroke="#5a5a5a" stroke-width="1.1"/><rect x="1222.5" y="770.5" width="14.5" height="4" fill="#5a5a5a"/><rect x="1222.5" y="777" width="8" height="3.5" fill="#5a5a5a"/><path d="M1222.5 781 H1237" stroke="#5a5a5a" stroke-width="1"/><rect x="1265.5" y="770.5" width="13.5" height="14.5" fill="none" stroke="#5a5a5a" stroke-width="1.1"/><path d="M1270 770.5 V785 M1274.5 770.5 V785 M1265.5 775.3 H1279 M1265.5 780.1 H1279" stroke="#5a5a5a" stroke-width="1"/><path d="M1312 770.5 H1322 V785 H1312 Z" fill="none" stroke="#5a5a5a" stroke-width="1.1"/><path d="M1309.5 773.5 H1312 M1309.5 782 H1312" stroke="#5a5a5a" stroke-width="1.1"/><path d="M1343.5 777.5 H1352" stroke="#444" stroke-width="1.2"/><path d="M1358 778.4 H1466" stroke="#b0b0b0" stroke-width="1"/><path d="M1412 775.5 V781.5" stroke="#aaa" stroke-width="1"/><rect x="1417" y="772.6" width="5" height="11.8" fill="#5f5f5f"/><path d="M1470.8 778 H1479.2 M1475 773.6 V782.4" stroke="#444" stroke-width="1.1"/></svg>
<span style="position:absolute;left:232.50px;top:91.97px;line-height:12.2px;white-space:pre;color:#262626;font-size:12.2px;font-weight:400;transform:scaleX(1.0276);transform-origin:0 0;">Calibri</span>
<span style="position:absolute;left:336.80px;top:91.97px;line-height:12.2px;white-space:pre;color:#262626;font-size:12.2px;font-weight:400;transform:scaleX(0.9086);transform-origin:0 0;">11</span>
<span style="position:absolute;left:235.80px;top:124.92px;line-height:12.5px;white-space:pre;color:#3a3a3a;font-size:12.5px;font-weight:700;transform:scaleX(1.0519);transform-origin:0 0;">N</span>
<span style="position:absolute;left:261.50px;top:123.73px;line-height:14.5px;white-space:pre;color:#3a3a3a;font-size:14.5px;font-weight:400;font-style:italic;font-family:'Liberation Serif',serif;">I</span>
<span style="position:absolute;left:287.90px;top:124.92px;line-height:12.5px;white-space:pre;color:#3a3a3a;font-size:12.5px;font-weight:700;transform:scaleX(0.9588);transform-origin:0 0;">S</span>
<div style="position:absolute;left:287.5px;top:136.5px;width:9px;height:1.3px;background:#555;"></div>
<span style="position:absolute;left:360.20px;top:123.77px;line-height:13.5px;white-space:pre;color:#444;font-size:13.5px;font-weight:700;transform:scaleX(1.2718);transform-origin:0 0;">A</span>
<span style="position:absolute;left:419.80px;top:98.69px;line-height:8.4px;white-space:pre;color:#555;font-size:8.4px;font-weight:400;transform:scaleX(0.8423);transform-origin:0 0;">0%</span>
<span style="position:absolute;left:443.00px;top:98.69px;line-height:8.4px;white-space:pre;color:#555;font-size:8.4px;font-weight:400;transform:scaleX(0.8947);transform-origin:0 0;">25%</span>
<span style="position:absolute;left:468.70px;top:98.69px;line-height:8.4px;white-space:pre;color:#555;font-size:8.4px;font-weight:400;transform:scaleX(0.9245);transform-origin:0 0;">50%</span>
<span style="position:absolute;left:494.60px;top:98.69px;line-height:8.4px;white-space:pre;color:#555;font-size:8.4px;font-weight:400;transform:scaleX(0.9185);transform-origin:0 0;">75%</span>
<span style="position:absolute;left:519.00px;top:98.69px;line-height:8.4px;white-space:pre;color:#555;font-size:8.4px;font-weight:400;transform:scaleX(0.8496);transform-origin:0 0;">100%</span>
</body></html>
